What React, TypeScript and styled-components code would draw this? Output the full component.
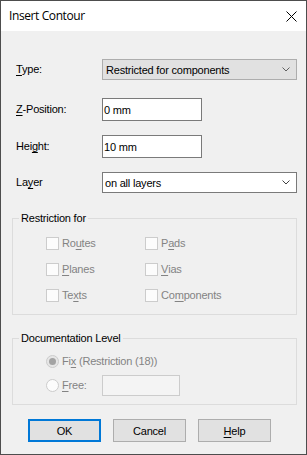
import React from 'react';
import styled, { createGlobalStyle } from 'styled-components';

const GlobalStyle = createGlobalStyle`
  html, body {
    margin: 0;
    padding: 0;
    background: #f0f0f0;
  }
  * {
    box-sizing: border-box;
  }
`;

const Window = styled.div`
  width: 307px;
  height: 455px;
  border: 1px solid #4d4d4d;
  background: #f0f0f0;
  display: flex;
  flex-direction: column;
  font-family: 'Liberation Sans', Arial, sans-serif;
  font-size: 11px;
  letter-spacing: -0.2px;
  color: #000;
`;

const TitleBar = styled.div`
  height: 30px;
  background: #fff;
  display: flex;
  align-items: center;
  justify-content: space-between;
  padding: 0 9px 0 8px;
`;

const Title = styled.span`
  font-family: 'Open Sans', 'Noto Sans', sans-serif;
  font-size: 12px;
  letter-spacing: -0.4px;
  color: #000;
  margin-top: -1px;
`;

const CloseIcon = () => (
  <svg width="11" height="11" viewBox="0 0 11 11">
    <path d="M0.5 0.5 L10.5 10.5 M10.5 0.5 L0.5 10.5" stroke="#000" strokeWidth="1" />
  </svg>
);

const Content = styled.div`
  flex: 1;
  display: flex;
  flex-direction: column;
  padding: 28px 9px 0 11px;
`;

const Row = styled.div<{ $mt?: number }>`
  display: flex;
  align-items: center;
  padding-left: 4px;
  margin-top: ${(p) => p.$mt ?? 0}px;
`;

const Label = styled.span`
  width: 86px;
  line-height: 13px;
`;

const Key = styled.u`
  text-decoration: underline;
  text-underline-offset: 2px;
`;

const Combo = styled.div<{ $editable?: boolean }>`
  flex: 1;
  height: 21px;
  display: flex;
  align-items: center;
  justify-content: space-between;
  padding: 0 6px 0 ${(p) => (p.$editable ? 2 : 3)}px;
  background: ${(p) => (p.$editable ? '#fff' : '#e1e1e1')};
  border: 1px solid ${(p) => (p.$editable ? '#7a7a7a' : '#adadad')};
`;

const Chevron = ({ color }: { color: string }) => (
  <svg width="8" height="5" viewBox="0 0 8 5">
    <path d="M0.5 0.5 L4 4 L7.5 0.5" stroke={color} strokeWidth="1" fill="none" />
  </svg>
);

const TextBox = styled.div`
  width: 100px;
  height: 23px;
  display: flex;
  align-items: center;
  padding-left: 1px;
  background: #fff;
  border: 1px solid #7a7a7a;
`;

const Group = styled.fieldset<{ $mt: number }>`
  margin: ${(p) => p.$mt}px 0 0 0;
  padding: 0;
  border: 1px solid #dcdcdc;
  min-width: 0;
`;

const Legend = styled.legend`
  margin-left: 6px;
  padding: 0 2px;
  line-height: 13px;
  color: #000;
`;

const GroupBody = styled.div<{ $pt: number; $pb: number }>`
  padding: ${(p) => p.$pt}px 0 ${(p) => p.$pb}px 33px;
`;

const CheckGrid = styled.div`
  display: grid;
  grid-template-columns: 99px auto;
  grid-auto-rows: 13px;
  row-gap: 13px;
`;

const Option = styled.div`
  display: flex;
  align-items: center;
  color: #838383;
  line-height: 13px;
`;

const Box = styled.span`
  width: 13px;
  height: 13px;
  border: 1px solid #cccccc;
  background: #fcfcfc;
  margin-right: 3px;
`;

const Radio = styled.span<{ $checked?: boolean }>`
  width: 13px;
  height: 13px;
  border-radius: 50%;
  border: 1px solid #cccccc;
  background: ${(p) => (p.$checked ? '#e6e6e6' : '#fcfcfc')};
  margin-right: 3px;
  display: flex;
  align-items: center;
  justify-content: center;
  &::after {
    content: '';
    display: ${(p) => (p.$checked ? 'block' : 'none')};
    width: 7px;
    height: 7px;
    border-radius: 50%;
    background: #a3a3a3;
  }
`;

const RadioRow = styled(Option)<{ $mt?: number }>`
  margin-top: ${(p) => p.$mt ?? 0}px;
  height: ${(p) => (p.$mt ? 21 : 13)}px;
`;

const FreeLabel = styled.span`
  width: 40px;
`;

const DisabledField = styled.div`
  width: 78px;
  height: 21px;
  border: 1px solid #cccccc;
  background: #f4f4f4;
`;

const ButtonBar = styled.div`
  display: flex;
  gap: 12px;
  margin-top: 14px;
  padding-left: 16px;
`;

const Button = styled.button<{ $default?: boolean }>`
  width: 73px;
  height: 23px;
  padding: 0;
  font-family: 'Liberation Sans', Arial, sans-serif;
  font-size: 11px;
  letter-spacing: -0.2px;
  color: #000;
  background: #e1e1e1;
  border: ${(p) => (p.$default ? '2px solid #0078d7' : '1px solid #adadad')};
  border-radius: 0;
  outline: none;
`;

export default function App() {
  return (
    <>
      <GlobalStyle />
      <Window>
        <TitleBar>
          <Title>Insert Contour</Title>
          <CloseIcon />
        </TitleBar>
        <Content>
          <Row>
            <Label>
              <Key>T</Key>ype:
            </Label>
            <Combo>
              <span>Restricted for components</span>
              <Chevron color="#606060" />
            </Combo>
          </Row>
          <Row $mt={18}>
            <Label>
              <Key>Z</Key>-Position:
            </Label>
            <TextBox>0 mm</TextBox>
          </Row>
          <Row $mt={14}>
            <Label>
              Hei<Key>g</Key>ht:
            </Label>
            <TextBox>10 mm</TextBox>
          </Row>
          <Row $mt={14}>
            <Label>
              La<Key>y</Key>er
            </Label>
            <Combo $editable>
              <span>on all layers</span>
              <Chevron color="#404040" />
            </Combo>
          </Row>

          <Group $mt={19}>
            <Legend>Restriction for</Legend>
            <GroupBody $pt={12} $pb={12}>
              <CheckGrid>
                <Option>
                  <Box />
                  Ro<Key>u</Key>tes
                </Option>
                <Option>
                  <Box />
                  P<Key>a</Key>ds
                </Option>
                <Option>
                  <Box />
                  <Key>P</Key>lanes
                </Option>
                <Option>
                  <Box />
                  <Key>V</Key>ias
                </Option>
                <Option>
                  <Box />
                  Te<Key>x</Key>ts
                </Option>
                <Option>
                  <Box />
                  Co<Key>m</Key>ponents
                </Option>
              </CheckGrid>
            </GroupBody>
          </Group>

          <Group $mt={17}>
            <Legend>Documentation Level</Legend>
            <GroupBody $pt={10} $pb={8}>
              <RadioRow>
                <Radio $checked />
                Fi<Key>x</Key>&nbsp;(Restriction (18))
              </RadioRow>
              <RadioRow $mt={7}>
                <Radio />
                <FreeLabel>
                  <Key>F</Key>ree:
                </FreeLabel>
                <DisabledField />
              </RadioRow>
            </GroupBody>
          </Group>

          <ButtonBar>
            <Button $default>OK</Button>
            <Button>Cancel</Button>
            <Button>
              <Key>H</Key>elp
            </Button>
          </ButtonBar>
        </Content>
      </Window>
    </>
  );
}
